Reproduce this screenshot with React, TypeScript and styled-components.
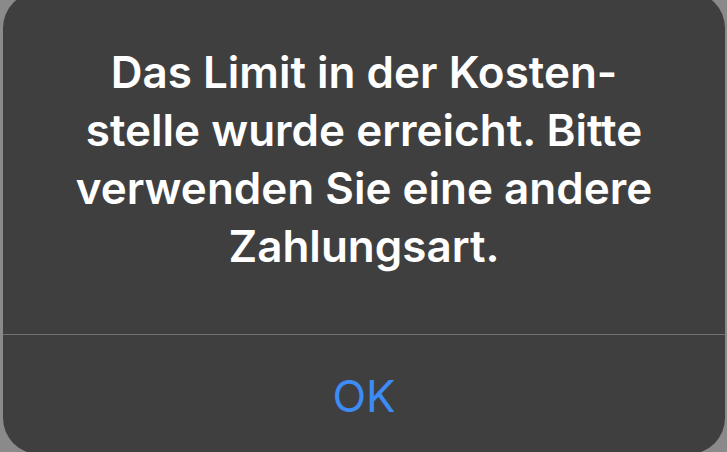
import React from "react";
import styled, { createGlobalStyle } from "styled-components";

const GlobalStyle = createGlobalStyle`
  html, body {
    margin: 0;
    padding: 0;
    background: #8a8a8a;
    overflow: hidden;
  }
  body {
    width: 727px;
    height: 452px;
  }
`;

const Alert = styled.div`
  margin-left: 3px;
  margin-top: -8px;
  width: 722px;
  height: 462px;
  border-radius: 36px;
  background: #3f3f3f;
  display: flex;
  flex-direction: column;
  overflow: hidden;
`;

const Message = styled.div`
  height: 343px;
  box-sizing: border-box;
  padding-bottom: 8px;
  display: flex;
  flex-direction: column;
  align-items: center;
  justify-content: center;
  border-bottom: 1px solid #717171;
`;

const Line = styled.div`
  font-family: Inter, "Noto Sans", sans-serif;
  font-weight: 600;
  font-size: 44px;
  line-height: 58px;
  color: #ffffff;
  white-space: nowrap;
  text-align: center;
`;

const Button = styled.button`
  flex: 1;
  border: none;
  background: transparent;
  font-family: Inter, "Noto Sans", sans-serif;
  font-weight: 400;
  font-size: 44px;
  color: #3d8cf5;
  padding: 2px 0 0 0;
  cursor: pointer;
`;

const lines = [
  "Das Limit in der Kosten-",
  "stelle wurde erreicht. Bitte",
  "verwenden Sie eine andere",
  "Zahlungsart.",
];

export default function App() {
  return (
    <>
      <GlobalStyle />
      <Alert>
        <Message>
          {lines.map((l) => (
            <Line key={l}>{l}</Line>
          ))}
        </Message>
        <Button>OK</Button>
      </Alert>
    </>
  );
}
